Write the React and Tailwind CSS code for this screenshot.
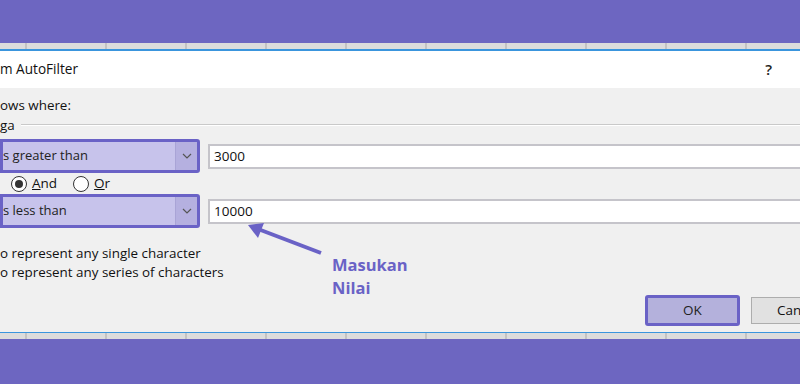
import React from 'react';

const font = { fontFamily: '"Open Sans", "Noto Sans", sans-serif' };

function SheetStrip() {
  const cols = [0, 1, 2, 3, 4, 5, 6, 7, 8, 9];
  return (
    <div className="flex h-[6px] bg-[#dcdcdc] overflow-hidden">
      <div className="w-[25px] shrink-0" />
      {cols.map((c) => (
        <div key={c} className="w-[80px] shrink-0 border-l-2 border-[#c3c3c3]" />
      ))}
    </div>
  );
}

function Combo({ label }) {
  return (
    <div className="flex w-[200px] h-[34px] border-[3px] border-[#6a62c6] rounded-r-[3px] bg-[#c7c3eb] shrink-0">
      <div className="flex-1 flex items-center text-[13px] text-[#222]">{label}</div>
      <div className="w-[22px] flex items-center justify-center bg-[#b5b0e0] border-l border-[#a9a4d6]">
        <svg width="10" height="6" viewBox="0 0 10 6">
          <path d="M1 1L5 5L9 1" fill="none" stroke="#555" strokeWidth="1.2" />
        </svg>
      </div>
    </div>
  );
}

function Field({ value }) {
  return (
    <div className="flex-1 h-[25px] ml-[8px] bg-white border-2 border-r-0 border-[#c5c4ca] flex items-center pl-[4px] text-[13.5px] text-[#111]">
      {value}
    </div>
  );
}

function Radio({ checked, letter, rest }) {
  return (
    <div className="flex items-center gap-[5px]">
      <div className="w-[16px] h-[16px] rounded-full border border-[#333] bg-white flex items-center justify-center">
        {checked && <div className="w-[8px] h-[8px] rounded-full bg-[#333]" />}
      </div>
      <span className="text-[13.5px] text-[#111]">
        <span className="underline">{letter}</span>{rest}
      </span>
    </div>
  );
}

export default function App() {
  return (
    <div className="relative w-[800px] h-[384px] overflow-hidden flex flex-col bg-[#6d66c1]" style={font}>
      <div className="h-[43px] bg-[#6d66c1]" />
      <SheetStrip />
      <div className="h-[2px] bg-[#3a95dd]" />

      {/* title bar */}
      <div className="h-[37px] bg-white flex items-center justify-between pr-[28px]">
        <span className="text-[13.6px] text-[#111]">m AutoFilter</span>
        <span className="text-[15px] font-semibold text-[#222]">?</span>
      </div>

      {/* body */}
      <div className="h-[244px] bg-[#f0f0f0] flex flex-col text-[13.4px] text-[#111]">
        <div className="h-[18px] mt-[8px] flex items-center">ows where:</div>
        <div className="h-[18px] mt-[2px] flex items-center">
          <span>ga</span>
          <div className="flex-1 ml-[6px] border-t border-[#c9c9c9] border-b-white border-b" />
        </div>
        <div className="mt-[5px] flex items-center">
          <Combo label="s greater than" />
          <Field value="3000" />
        </div>
        <div className="h-[21px] flex items-center gap-[16px] pl-[11px]">
          <Radio checked letter="A" rest="nd" />
          <Radio letter="O" rest="r" />
        </div>
        <div className="flex items-center">
          <Combo label="s less than" />
          <Field value="10000" />
        </div>
        <div className="mt-[16px] leading-[19px]">o represent any single character</div>
        <div className="leading-[19px]">o represent any series of characters</div>
        <div className="mt-[13px] flex items-center">
          <div className="shrink-0 ml-[645px] w-[95px] h-[31px] border-[3px] border-[#6a62c6] rounded-[3px] bg-[#b4b1dc] flex items-center justify-center text-[13.5px] text-[#222]">
            OK
          </div>
          <div className="shrink-0 ml-[11px] w-[80px] h-[27px] border border-[#adadad] border-r-0 bg-[#e1e1e1] flex items-center pl-[25px] text-[13.5px] text-[#111]">
            Cancel
          </div>
        </div>
      </div>

      <div className="h-[1px] bg-[#3a95dd]" />
      <SheetStrip />
      <div className="flex-1 bg-[#6d66c1]" />

      {/* annotation */}
      <svg className="absolute left-[240px] top-[216px] w-[90px] h-[42px]" viewBox="240 216 90 42">
        <line x1="321" y1="253" x2="258" y2="229" stroke="#6a62c6" strokeWidth="4" />
        <polygon points="248,225 264,223 258,238" fill="#6a62c6" />
      </svg>
      <div className="absolute left-[332px] top-[253px] text-[16.5px] leading-[23px] font-bold text-[#6a62c6]">
        Masukan<br />Nilai
      </div>
    </div>
  );
}
